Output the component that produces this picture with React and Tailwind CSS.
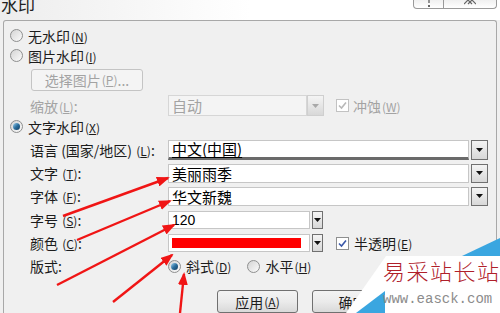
import React from 'react';

const FONT = "font-['Noto_Sans_CJK_SC','Liberation_Sans',sans-serif]";

function Key({ k }) {
  return (
    <span className="text-[12px] ml-[1px]">
      (<span className="underline underline-offset-1">{k}</span>)
    </span>
  );
}

function Radio({ checked }) {
  return (
    <span className="flex items-center justify-center w-[13px] h-[13px] rounded-full border border-[#8e8f8f] bg-gradient-to-br from-[#d4d4d4] to-[#fbfbfb] shrink-0">
      {checked && (
        <span className="w-[7px] h-[7px] rounded-full bg-gradient-to-br from-[#9fd5f2] via-[#2a6f9e] to-[#153c5e]" />
      )}
    </span>
  );
}

function Checkbox({ disabled }) {
  return (
    <span
      className={`flex items-center justify-center w-[13px] h-[13px] border bg-white shrink-0 ${
        disabled ? 'border-[#c2c2c2]' : 'border-[#8e8f8f]'
      }`}
    >
      <svg width="9" height="9" viewBox="0 0 9 9">
        <path
          d="M1 4.5 L3.5 7 L8 1.5"
          fill="none"
          stroke={disabled ? '#b8b8b8' : '#3a58a8'}
          strokeWidth="1.6"
        />
      </svg>
    </span>
  );
}

function DropBtn({ disabled, w = 'w-[17px]' }) {
  return (
    <span
      className={`flex items-center justify-center ${w} h-full border bg-gradient-to-b from-[#f4f4f4] to-[#d8d8d8] shrink-0 ${
        disabled ? 'border-[#cfcfcf]' : 'border-[#707070]'
      }`}
    >
      <svg width="7" height="4" viewBox="0 0 7 4">
        <path d="M0 0 H7 L3.5 4 Z" fill={disabled ? '#a8a8a8' : '#111'} />
      </svg>
    </span>
  );
}

function Label({ children }) {
  return <span className="w-[138px] shrink-0 leading-none whitespace-nowrap">{children}</span>;
}

function Field({ children, w, btnW, underline }) {
  return (
    <div className={`flex h-full ${w} gap-[2px]`}>
      <div
        className={`flex-1 flex items-center bg-white border border-[#c6c6c6] pl-[3px] text-[15px] leading-none text-black ${
          underline ? 'border-b-[3px] border-b-[#6a6a6a]' : ''
        }`}
      >
        {children}
      </div>
      <DropBtn w={btnW} />
    </div>
  );
}

function Button({ children, w = 'w-[81px]' }) {
  return (
    <span
      className={`flex items-center justify-center ${w} h-[23px] border border-[#707070] rounded-[3px] bg-gradient-to-b from-[#f3f3f3] via-[#ebebeb] to-[#d9d9d9] leading-none`}
    >
      {children}
    </span>
  );
}

function Arrows() {
  const lines = [
    [63, 216, 168, 178],
    [77, 240, 170, 201],
    [57, 285, 174, 225],
    [113, 302, 172, 255],
    [180, 313, 184, 274],
  ];
  return (
    <svg className="absolute inset-0 pointer-events-none" width="500" height="313">
      <defs>
        <marker
          id="ah"
          markerWidth="13"
          markerHeight="10"
          refX="11"
          refY="5"
          orient="auto"
          markerUnits="userSpaceOnUse"
        >
          <path d="M0 0 L13 5 L0 10 Z" fill="#f01515" />
        </marker>
      </defs>
      {lines.map(([x1, y1, x2, y2], i) => (
        <line
          key={i}
          x1={x1}
          y1={y1}
          x2={x2}
          y2={y2}
          stroke="#f01515"
          strokeWidth="2.4"
          markerEnd="url(#ah)"
        />
      ))}
    </svg>
  );
}

function Logo() {
  return (
    <>
      <svg className="absolute inset-0 pointer-events-none" width="500" height="313">
        <polygon points="386,256 500,256 500,313 346,313" fill="#ffffff" />
        <polygon points="462,256 500,238 500,256" fill="#3aa6e0" />
        <polygon points="356,313 385,291 385,313" fill="#3aa6e0" />
      </svg>
      <div className="absolute left-[383px] top-[259px] text-[22px] leading-none tracking-[1.5px] text-[#b0202a] font-light whitespace-nowrap">
        易采站长站
      </div>
      <div className="absolute left-[383px] top-[292px] font-['Liberation_Mono',monospace] text-[14px] leading-none text-[#8c8c8c] whitespace-nowrap">
        www.easck.com
      </div>
    </>
  );
}

export default function App() {
  return (
    <div className={`relative w-[500px] h-[313px] overflow-hidden bg-[#f0f0f0] text-[14px] text-[#1c1c1c] ${FONT}`}>
      {/* Title bar */}
      <div className="h-[20px] flex items-start justify-between bg-gradient-to-r from-[#ededed] via-white to-white">
        <span className="-mt-[4px] ml-[1px] text-[17px] leading-none text-[#222]">水印</span>
        <div className="flex mr-[3px]">
          <span className="flex justify-center w-[31px] h-[9px] border border-t-0 border-[#9a9a9a] rounded-bl-[4px] bg-gradient-to-b from-[#f0f0f0] to-white overflow-hidden">
            <svg width="8" height="8" viewBox="0 0 8 8">
              <path d="M4 -2 V3" stroke="#666" strokeWidth="1.4" />
              <rect x="3" y="5" width="2" height="2" fill="#666" />
            </svg>
          </span>
          <span className="flex justify-center w-[53px] h-[9px] border border-t-0 border-l-0 border-[#9a9a9a] rounded-br-[4px] bg-gradient-to-b from-[#f0f0f0] to-white overflow-hidden">
            <svg width="12" height="8" viewBox="0 0 12 8">
              <path d="M0 -4 L8 4 M8 -4 L0 4 M4 -4 L12 4 M12 -4 L4 4" stroke="#666" strokeWidth="1.2" />
            </svg>
          </span>
        </div>
      </div>

      {/* Group box */}
      <div className="mx-[3px] h-[293px] border border-b-0 border-[#a8a8a8] rounded-t-[3px] flex flex-col">
        <div className="mt-[5px] h-[20px] flex items-center gap-[5px] pl-[6px]">
          <Radio />
          <span className="leading-none">无水印<Key k="N" /></span>
        </div>
        <div className="h-[20px] flex items-center gap-[5px] pl-[6px]">
          <Radio />
          <span className="leading-none">图片水印<Key k="I" /></span>
        </div>
        <div className="mt-[3px] h-[23px] flex pl-[27px]">
          <span className="flex items-center justify-center w-[112px] h-full border border-[#c4c4c4] rounded-[3px] bg-[#f4f4f4] text-[#a3a3a3] leading-none whitespace-nowrap">
            选择图片<Key k="P" />...
          </span>
        </div>
        <div className="mt-[4px] h-[21px] flex items-center pl-[26px] text-[#a3a3a3]">
          <Label>缩放<Key k="L" />:</Label>
          <div className="flex h-full w-[156px]">
            <div className="flex-1 flex items-center border border-[#d6d6d6] bg-[#f4f4f4] pl-[3px] text-[15px] leading-none">
              自动
            </div>
            <DropBtn disabled />
          </div>
          <span className="ml-[12px] flex items-center gap-[4px]">
            <Checkbox disabled />
            <span className="leading-none">冲蚀<Key k="W" /></span>
          </span>
        </div>
        <div className="h-[21px] flex items-center gap-[5px] pl-[6px]">
          <Radio checked />
          <span className="leading-none">文字水印<Key k="X" /></span>
        </div>
        <div className="mt-[3px] h-[20px] flex items-center pl-[26px]">
          <Label>语言 (国家/地区) <Key k="L" />:</Label>
          <Field w="w-[320px]" underline>
            <span className="underline underline-offset-2">中文(中国)</span>
          </Field>
        </div>
        <div className="mt-[4px] h-[19px] flex items-center pl-[26px]">
          <Label>文字 <Key k="T" />:</Label>
          <Field w="w-[320px]">美丽雨季</Field>
        </div>
        <div className="mt-[4px] h-[19px] flex items-center pl-[26px]">
          <Label>字体 <Key k="F" />:</Label>
          <Field w="w-[320px]">华文新魏</Field>
        </div>
        <div className="mt-[5px] h-[19px] flex items-center pl-[26px]">
          <Label>字号 <Key k="S" />:</Label>
          <Field w="w-[155px]" btnW="w-[11px]">
            <span className="font-['Liberation_Sans',sans-serif] text-[14px]">120</span>
          </Field>
        </div>
        <div className="mt-[5px] h-[18px] flex items-center pl-[26px]">
          <Label>颜色 <Key k="C" />:</Label>
          <div className="flex h-full w-[155px] gap-[2px]">
            <div className="flex-1 flex items-center bg-white border border-[#c6c6c6] p-[3px] pr-[8px]">
              <span className="w-full h-full bg-[#ff0000]" />
            </div>
            <DropBtn w="w-[11px]" />
          </div>
          <span className="ml-[13px] flex items-center gap-[5px]">
            <Checkbox />
            <span className="leading-none">半透明<Key k="E" /></span>
          </span>
        </div>
        <div className="mt-[4px] h-[20px] flex items-center pl-[26px]">
          <Label>版式:</Label>
          <span className="flex items-center gap-[5px]">
            <Radio checked />
            <span className="leading-none">斜式<Key k="D" /></span>
          </span>
          <span className="ml-[16px] flex items-center gap-[5px]">
            <Radio />
            <span className="leading-none">水平<Key k="H" /></span>
          </span>
        </div>
        <div className="mt-[14px] flex gap-[14px] pl-[213px]">
          <Button>应用<Key k="A" /></Button>
          <Button>确定</Button>
        </div>
      </div>

      <Arrows />
      <Logo />
    </div>
  );
}
